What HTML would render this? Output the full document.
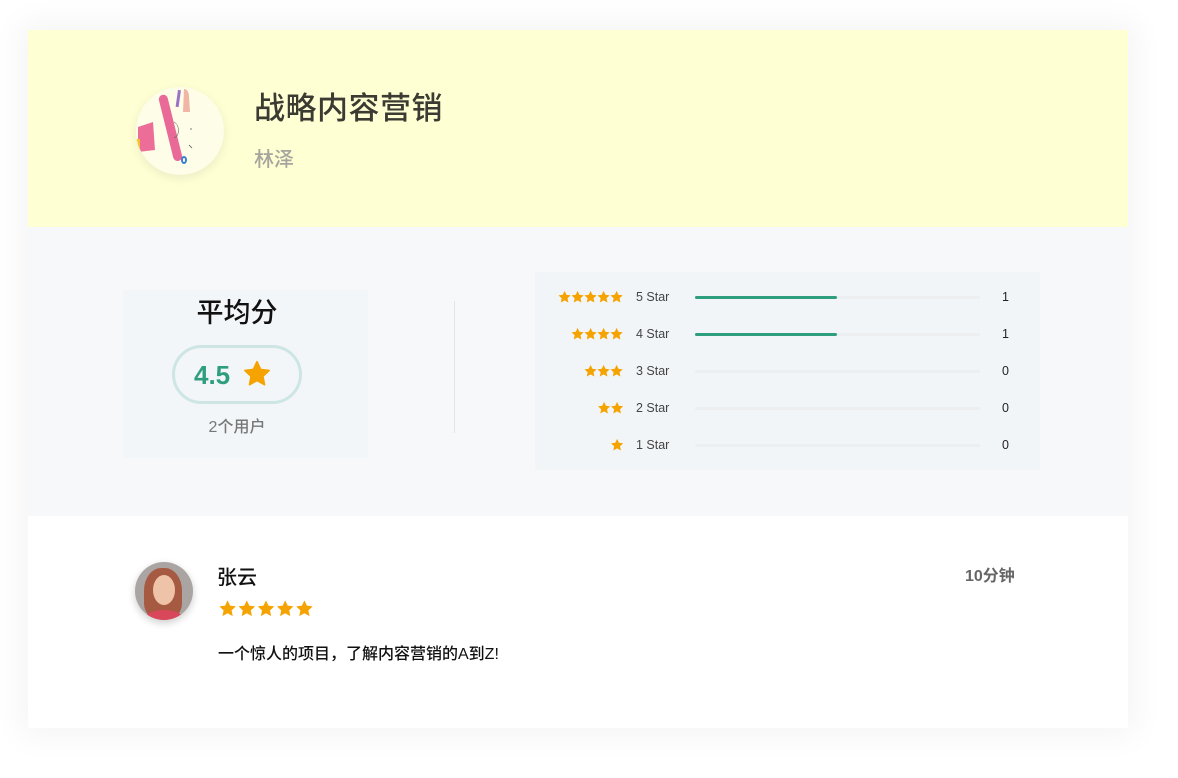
<!DOCTYPE html>
<html><head><meta charset="utf-8"><style>
*{margin:0;padding:0;box-sizing:border-box}
body{width:1178px;height:778px;background:#fff;position:relative;overflow:hidden;font-family:"Liberation Sans","Noto Sans CJK SC",sans-serif}
.a{position:absolute}
.card{left:28px;top:30px;width:1100px;height:698px;background:#fff;box-shadow:0 0 30px 8px rgba(0,0,0,0.045)}
.hdr{left:28px;top:30px;width:1100px;height:197px;background:#ffffd4}
.mid{left:28px;top:227px;width:1100px;height:289px;background:#f6f8fa}
.st{fill:#f5a300}
.row{height:37px;left:535px;width:505px}
.row .s{position:absolute;top:10px;height:13px}
.row .lb{position:absolute;left:101px;top:10px;font-size:12.5px;color:#444;line-height:14px}
.row .bar{position:absolute;left:160px;top:16px;width:285px;height:3px;background:#eceef0;border-radius:2px}
.row .fill{position:absolute;left:160px;top:16px;width:142px;height:3px;background:#2f9e7f;border-radius:2px}
.row .n{position:absolute;left:467px;top:10px;font-size:12.5px;color:#222;line-height:14px}
</style></head><body>
<svg width="0" height="0" style="position:absolute"><defs><path id="star" d="M12 1.5l3.1 6.6 7.2.9-5.3 5 1.4 7.1L12 17.6 5.6 21.1 7 14 1.7 9l7.2-.9z"/></defs></svg>
<div class="a card"></div>
<div class="a hdr"></div>
<div class="a mid"></div>

<div class="a" style="left:136px;top:87px;width:88px;height:88px;border-radius:50%;background:#fdfde8;box-shadow:0 3px 10px rgba(0,0,0,0.08);overflow:hidden">
<svg width="88" height="88" viewBox="0 0 88 88">
<rect x="30" y="7" width="9" height="68" rx="4.5" fill="#e96a97" transform="rotate(-14 34 41)"/>
<path d="M2 40l15-5 2 28-17 2z" fill="#ec6e98"/>
<rect x="0" y="52" width="4" height="12" fill="#f3c22a"/>
<rect x="41" y="3" width="3" height="17" fill="#9a74c4" transform="rotate(8 42 10)"/>
<path d="M48 2c3 0 5 3 5 8l1 15h-7z" fill="#f0b5a5"/>
<ellipse cx="48" cy="73" rx="3" ry="4" fill="#3b7fd1"/>
<ellipse cx="48" cy="73" rx="1" ry="2" fill="#fff"/>
<path d="M38 35c6 3 6 14 0 16" stroke="#666" stroke-width=".6" fill="none"/>
<path d="M54 42l2 0M53 58l3 3" stroke="#555" stroke-width=".8"/>
</svg></div>
<div class="a" style="left:254px;top:88px;font-size:31px;font-weight:500;color:#3b3b33;line-height:42px;letter-spacing:0.5px">战略内容营销</div>
<div class="a" style="left:254px;top:145px;font-size:20px;font-weight:500;color:#a5a59e;line-height:30px">林泽</div>

<div class="a" style="left:123px;top:290px;width:245px;height:168px;background:#f3f6f9"></div>
<div class="a" style="left:123px;top:294px;width:228px;text-align:center;font-size:27px;font-weight:500;color:#111;line-height:38px">平均分</div>
<div class="a" style="left:172px;top:345px;width:130px;height:59px;border:3px solid #cde6e5;border-radius:30px"></div>
<div class="a" style="left:194px;top:359px;font-size:26px;font-weight:bold;color:#2f9e7f;line-height:32px">4.5</div>
<svg class="a" style="left:243px;top:360px" width="28" height="28" viewBox="0 0 24 24"><use href="#star" class="st" stroke="#f5a300" stroke-width="1.5" stroke-linejoin="round"/></svg>
<div class="a" style="left:123px;top:416px;width:228px;text-align:center;font-size:16px;font-weight:500;color:#777;line-height:24px">2个用户</div>
<div class="a" style="left:454px;top:301px;width:1px;height:132px;background:#e2e4e6"></div>

<div class="a" style="left:535px;top:272px;width:505px;height:198px;background:#f2f5f8"></div>

<div class="a row" style="top:280px"><svg class="s" style="left:22px" width="66" height="13" viewBox="0 0 110 22"><use href="#star" class="st"/><use href="#star" class="st" transform="translate(22)"/><use href="#star" class="st" transform="translate(44)"/><use href="#star" class="st" transform="translate(66)"/><use href="#star" class="st" transform="translate(88)"/></svg><div class="lb">5 Star</div><div class="bar"></div><div class="fill"></div><div class="n">1</div></div>
<div class="a row" style="top:317px"><svg class="s" style="left:35px" width="53" height="13" viewBox="0 0 88 22"><use href="#star" class="st"/><use href="#star" class="st" transform="translate(22)"/><use href="#star" class="st" transform="translate(44)"/><use href="#star" class="st" transform="translate(66)"/></svg><div class="lb">4 Star</div><div class="bar"></div><div class="fill"></div><div class="n">1</div></div>
<div class="a row" style="top:354px"><svg class="s" style="left:48px" width="40" height="13" viewBox="0 0 66 22"><use href="#star" class="st"/><use href="#star" class="st" transform="translate(22)"/><use href="#star" class="st" transform="translate(44)"/></svg><div class="lb">3 Star</div><div class="bar"></div><div class="n">0</div></div>
<div class="a row" style="top:391px"><svg class="s" style="left:62px" width="26" height="13" viewBox="0 0 44 22"><use href="#star" class="st"/><use href="#star" class="st" transform="translate(22)"/></svg><div class="lb">2 Star</div><div class="bar"></div><div class="n">0</div></div>
<div class="a row" style="top:428px"><svg class="s" style="left:75px" width="13" height="13" viewBox="0 0 22 22"><use href="#star" class="st"/></svg><div class="lb">1 Star</div><div class="bar"></div><div class="n">0</div></div>

<div class="a" style="left:135px;top:562px;width:58px;height:58px;border-radius:50%;background:#aaa5a3;box-shadow:0 3px 8px rgba(0,0,0,0.2);overflow:hidden">
<div style="position:absolute;left:9px;top:6px;width:38px;height:50px;border-radius:45% 45% 30% 30%;background:#a65a42"></div>
<div style="position:absolute;left:18px;top:13px;width:22px;height:30px;border-radius:50%;background:#eec3a8"></div>
<div style="position:absolute;left:10px;top:48px;width:38px;height:16px;border-radius:50% 50% 0 0;background:#d9485a"></div></div>
<div class="a" style="left:217px;top:564px;font-size:20px;font-weight:500;color:#111;line-height:28px">张云</div>
<svg class="a" style="left:218px;top:599px" width="96" height="18" viewBox="0 0 120 22"><use href="#star" class="st"/><use href="#star" class="st" transform="translate(24)"/><use href="#star" class="st" transform="translate(48)"/><use href="#star" class="st" transform="translate(72)"/><use href="#star" class="st" transform="translate(96)"/></svg>
<div class="a" style="left:965px;top:566px;font-size:16px;font-weight:bold;color:#666;line-height:22px">10分钟</div>
<div class="a" style="left:218px;top:643px;font-size:16px;font-weight:500;color:#111;line-height:24px">一个惊人的项目，了解内容营销的A到Z!</div>
</body></html>
